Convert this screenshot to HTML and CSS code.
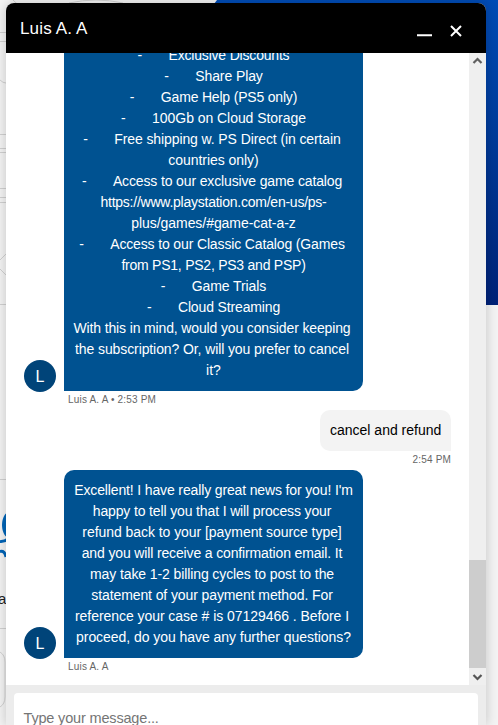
FILE: index.html
```html
<!DOCTYPE html>
<html lang="en">
<head>
<meta charset="utf-8">
<title>Chat</title>
<link rel="stylesheet" href="styles.css">
</head>
<body>
<svg class="backdrop" width="498" height="725" viewBox="0 0 498 725" aria-hidden="true">
  <defs><linearGradient id="sky" x1="0" y1="0" x2="0" y2="1"><stop offset="0" stop-color="#004bb5"/><stop offset=".4" stop-color="#003c9c"/><stop offset="1" stop-color="#002277"/></linearGradient></defs>
  <rect width="498" height="725" fill="#f3f3f3"/>
  <path d="M217 0H498V305H300L214 4Z" fill="url(#sky)"/>
  <g fill="none" stroke="#d0d0d0">
    <path d="M13 0Q16 4 22 6M69 3Q96-3 123 3M0 32.500H6M0 41.500H6M0 80Q3 83 6 83M0 134.500H6M0 148.500H6M0 152.500H6M0 188.500H6M0 197.500H6M0 202.500H6M0 260L6 254M0 269L6 275M0 304.500H6M0 479.500H6M0 628.500H6"/>
    <path d="M0 652Q5 655 5 662V697Q5 704 0 707"/>
  </g>
  <path d="M8 512C0 516 0 534 8 538Z" fill="#0064b7"/>
  <path d="M0 541.500Q4 542 8 539M0 551.500Q5 550.500 6 557" fill="none" stroke="#0064b7" stroke-width="3"/>
</svg>
<span class="behind">a</span>
<main class="chat">
  <header class="head">
    <h1 class="name">Luis A. A</h1>
    <svg width="46" height="14" viewBox="0 0 46 14" aria-hidden="true"><path d="M0 10.300H15" stroke="#fff" stroke-width="2"/><path d="M34 1L44 11M44 1L34 11" stroke="#fff" stroke-width="2"/></svg>
  </header>
  <section class="body">
    <div class="log">
      <div class="row">
        <span class="avatar">L</span>
        <div class="bubble agent">
          <p class="k4"><i>-</i>Exclusive Discounts</p>
          <p class="k2"><i>-</i>Share Play</p>
          <p class="k4"><i>-</i>Game Help (PS5 only)</p>
          <p class="k1"><i>-</i>100Gb on Cloud Storage</p>
          <p class="k2 wrap"><i>-</i>Free shipping w. PS Direct (in certain</p>
          <p class="k1">countries only)</p>
          <p class="k3 wrap"><i>-</i>Access to our exclusive game catalog</p>
          <p class="k5">https://www.playstation.com/en-us/ps-</p>
          <p class="k1">plus/games/#game-cat-a-z</p>
          <p class="k3 wrap"><i>-</i>Access to our Classic Catalog (Games</p>
          <p class="k5">from PS1, PS2, PS3 and PSP)</p>
          <p class="k2"><i>-</i>Game Trials</p>
          <p class="k3"><i>-</i>Cloud Streaming</p>
          <p class="k3 wrap">With this in mind, would you consider keeping</p>
          <p class="k2 wrap">the subscription? Or, will you prefer to cancel</p>
          <p>it?</p>
        </div>
      </div>
      <div class="meta">Luis A. A • 2:53 PM</div>
      <div class="bubble user">cancel and refund</div>
      <div class="meta own">2:54 PM</div>
      <div class="row">
        <span class="avatar">L</span>
        <div class="bubble agent">
          <p class="k3">Excellent! I have really great news for you! I'm</p>
          <p class="k3 wrap">happy to tell you that I will process your</p>
          <p class="k1 wrap">refund back to your [payment source type]</p>
          <p class="k3 wrap">and you will receive a confirmation email. It</p>
          <p class="k2 wrap">may take 1-2 billing cycles to post to the</p>
          <p class="k2 wrap">statement of your payment method. For</p>
          <p class="k1 wrap">reference your case # is 07129466 . Before I</p>
          <p class="k1">proceed, do you have any further questions?</p>
        </div>
      </div>
      <div class="meta last">Luis A. A</div>
    </div>
    <div class="scroll">
      <svg width="17" height="17" viewBox="0 0 17 17"><path d="M4.500 10L8.500 6L12.500 10" fill="none" stroke="#606060" stroke-width="2.200"/></svg>
      <span class="thumb"></span>
      <svg width="17" height="17" viewBox="0 0 17 17"><path d="M4.500 7L8.500 11L12.500 7" fill="none" stroke="#555" stroke-width="2.200"/></svg>
    </div>
  </section>
  <footer class="foot"><div class="input">Type your message...</div></footer>
</main>
</body>
</html>
```
FILE: styles.css
```css
* { box-sizing: border-box; }
body { margin: 0; height: 725px; overflow: hidden; position: relative; font-family: "Liberation Sans", Arial, sans-serif; }
.backdrop { position: absolute; top: 0; left: 0; }
.behind { position: absolute; left: -2px; top: 590px; font-size: 15px; color: #1f1f1f; }
.chat { position: relative; width: 480px; height: 722px; margin: 3px 0 0 6px; display: flex; flex-direction: column; border-radius: 8px 8px 0 0; overflow: hidden; background: #fff; box-shadow: 0 0 12px rgba(0, 0, 0, .2); }
.head { height: 50px; flex: none; background: #000; display: flex; justify-content: space-between; padding: 0 23px 0 14px; }
.head svg { margin-top: 22px; }
.name { margin: 17px 0 0; font-size: 17px; line-height: 18px; font-weight: 400; color: #fff; letter-spacing: .15px; }
.body { height: 632px; flex: none; display: flex; overflow: hidden; }
.log { flex: 1; display: flex; flex-direction: column; justify-content: flex-end; padding: 0 18px; }
.row { display: flex; align-items: flex-end; gap: 8px; flex: none; }
.avatar { width: 32px; height: 32px; border-radius: 50%; background: #004479; color: #fff; font-size: 16px; line-height: 34px; text-align: center; margin-bottom: -1px; }
.bubble { font-size: 14px; line-height: 21px; padding: 10px; flex: none; white-space: nowrap; }
.agent { width: 299px; background: #005291; color: #fff; text-align: center; border-radius: 10px 10px 10px 0; }
.agent p { margin: 0 -6px; }
.agent .wrap { padding-right: 3px; }
.agent i { display: inline-block; width: 31px; text-align: left; font-style: normal; }
.k1 { letter-spacing: -.05px; }
.k2 { letter-spacing: -.1px; }
.k3 { letter-spacing: -.14px; }
.k4 { letter-spacing: -.19px; }
.k5 { letter-spacing: -.24px; }
.user { width: 131px; height: 41px; align-self: flex-end; background: #f3f3f3; color: #000; border-radius: 10px 10px 0 10px; }
.meta { height: 19px; flex: none; padding: 3px 0 0 44px; font-size: 10px; line-height: 12px; letter-spacing: .18px; color: #666; }
.own { text-align: right; padding-left: 0; }
.last { height: 27px; }
.scroll { width: 17px; background: #efefef; display: flex; flex-direction: column; }
.scroll svg { flex: none; }
.thumb { height: 108px; margin-top: auto; background: #cdcdcd; }
.foot { flex: 1; background: #ececec; padding: 8px 8px 0; }
.input { height: 50px; background: #fff; border-radius: 4px; padding: 16px 9.500px; font-size: 14.500px; line-height: 18px; letter-spacing: -.17px; color: #757575; }
```
